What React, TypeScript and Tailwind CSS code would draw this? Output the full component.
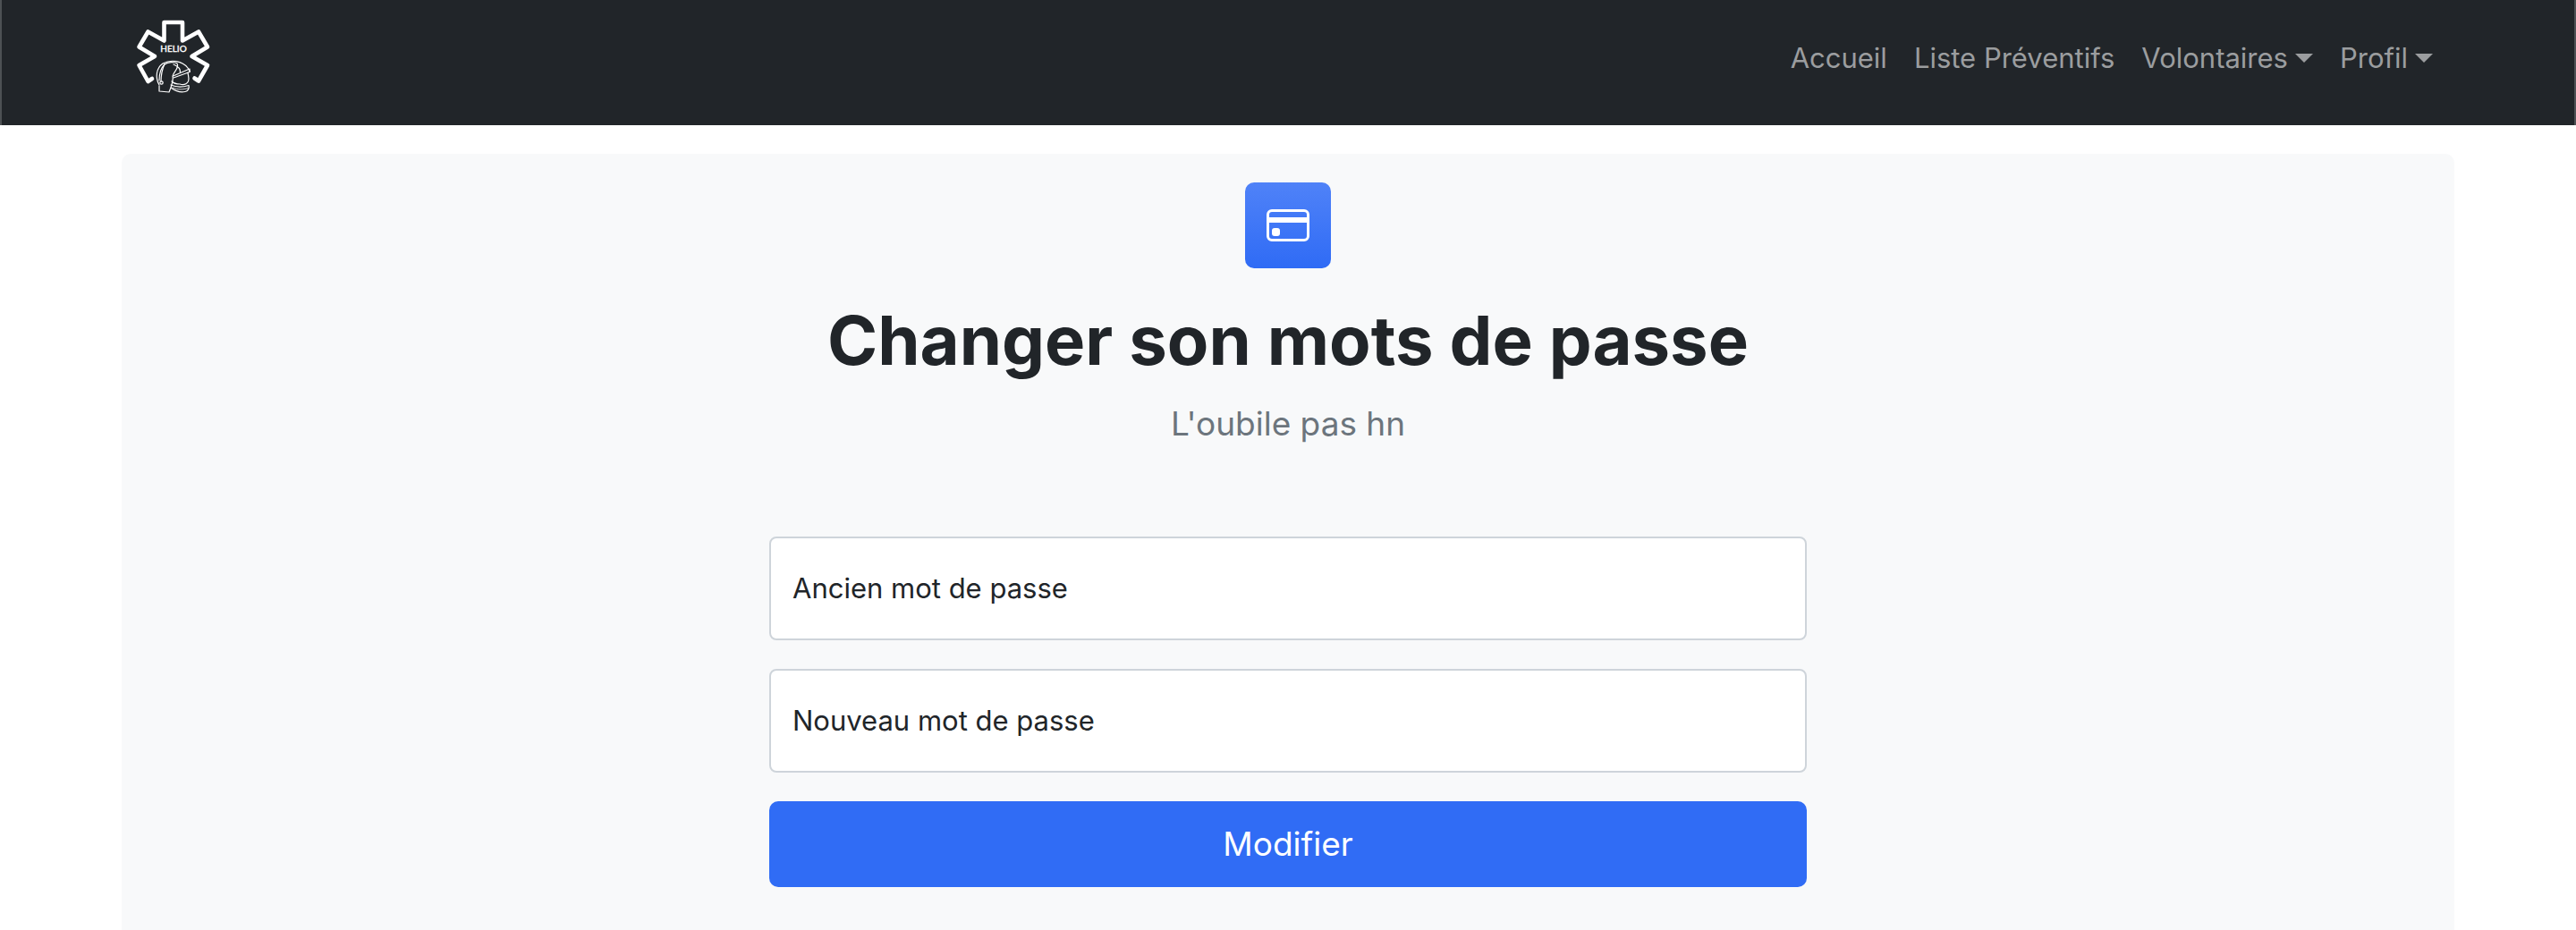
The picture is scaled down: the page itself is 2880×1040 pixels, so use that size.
import React from "react";
import { BsCreditCard } from "react-icons/bs";

function Logo() {
  return (
    <svg viewBox="0 0 130 130" className="h-[130px] w-[130px]" fill="none" stroke="#fff" role="img" aria-label="Helio">
      <path
        strokeWidth="4.6"
        strokeLinecap="round"
        strokeLinejoin="round"
        d="M40 88 L35.500 91 L25.500 73 L43 63 L25.500 52.500 L35.500 35.500 L53.500 45.500 V25 H74 V45.500 L92 35.500 L102 52.500 L84.500 63 L102 73 L92 90.500 L87.500 87.500"
      />
      <text x="64" y="58" textAnchor="middle" fontFamily="Lato, sans-serif" fontSize="10" fontWeight="500" fill="#fff" stroke="#fff" strokeWidth="0.3">
        HELIO
      </text>
      <g strokeWidth="1.2" strokeLinecap="round" strokeLinejoin="round">
        <path d="M48 95 C43 86 45 76 52 71 C61 66 74 68 80 76 L82.500 80" />
        <path d="M48 90 C48 82 50 76 54 72 C58 69 65 69 68 71 C71 76 64 80 63 85 C64 90 62 94 61 98 L59 103 L48 102 L48 96" />
        <path d="M54 71.500 C52 76 50 82 50 91" />
        <path d="M63.500 85 L82 77 V80.500 L64 87" />
        <path d="M64 72 C69 74 72 77 71.500 81" />
        <circle cx="50.500" cy="92.500" r="1.700" />
        <path d="M80 81 C80 84 82 87 80.500 91 C78 95 74 95 71 94 C67 94 64 93 62 91" />
        <path d="M61 95 C68 98 76 97 81 95.500 C82 99 80 102 77 102.500 C71 104 65 101 61 98" />
        <path d="M63 98 C69 101 76 100 80.500 98.500" strokeWidth="0.8" />
      </g>
    </svg>
  );
}

function Caret() {
  return <span aria-hidden="true" className="border-x-[10px] border-t-[10px] border-x-transparent border-t-current" />;
}

function Field({ id, label }: { id: string; label: string }) {
  return (
    <div className="relative">
      <input
        id={id}
        type="password"
        className="block h-29 w-full rounded-lg border-2 border-[#ced4da] bg-white px-6 text-[31px] text-[#212529] outline-none focus:border-[#86b7fe]"
      />
      <label htmlFor={id} className="pointer-events-none absolute inset-y-0 left-0 flex items-center px-6.5 text-[31px]">
        {label}
      </label>
    </div>
  );
}

export default function App() {
  return (
    <div className="min-h-screen bg-white font-['Inter',sans-serif] text-[#212529]">
      <nav className="border-x-2 border-[#4d5154] bg-[#212529]">
        <div className="mx-auto flex h-35 max-w-[2640px] items-start justify-between pr-10 pl-2.5">
          <a href="#"><Logo /></a>
          <ul className="flex gap-[30px] pt-10 text-[31px] leading-[50px] text-[#9b9d9f]">
            <li><a href="#">Accueil</a></li>
            <li><a href="#">Liste Préventifs</a></li>
            <li><button type="button" className="flex items-center gap-2">Volontaires<Caret /></button></li>
            <li><button type="button" className="flex items-center gap-2">Profil<Caret /></button></li>
          </ul>
        </div>
      </nav>
      <main className="mx-auto mt-8 max-w-[2608px] rounded-t-[10px] bg-[#f8f9fa] px-8 pt-8 pb-12">
        <header className="flex flex-col items-center text-center">
          <div className="flex size-24 items-center justify-center rounded-[10px] bg-linear-to-b from-[#4f82f8] to-[#2f6bf5] text-white">
            <BsCreditCard className="size-12" />
          </div>
          <h1 className="mt-8 text-[76px] leading-24 font-bold">Changer son mots de passe</h1>
          <p className="mt-4 text-[37px] leading-15 text-[#6c757d]">L'oubile pas hn</p>
        </header>
        <form className="mx-auto mt-24 flex max-w-[1160px] flex-col gap-8">
          <Field id="old-password" label="Ancien mot de passe" />
          <Field id="new-password" label="Nouveau mot de passe" />
          <button type="button" className="h-24 rounded-[10px] bg-[#306cf5] text-[37px] text-white">Modifier</button>
        </form>
      </main>
    </div>
  );
}
